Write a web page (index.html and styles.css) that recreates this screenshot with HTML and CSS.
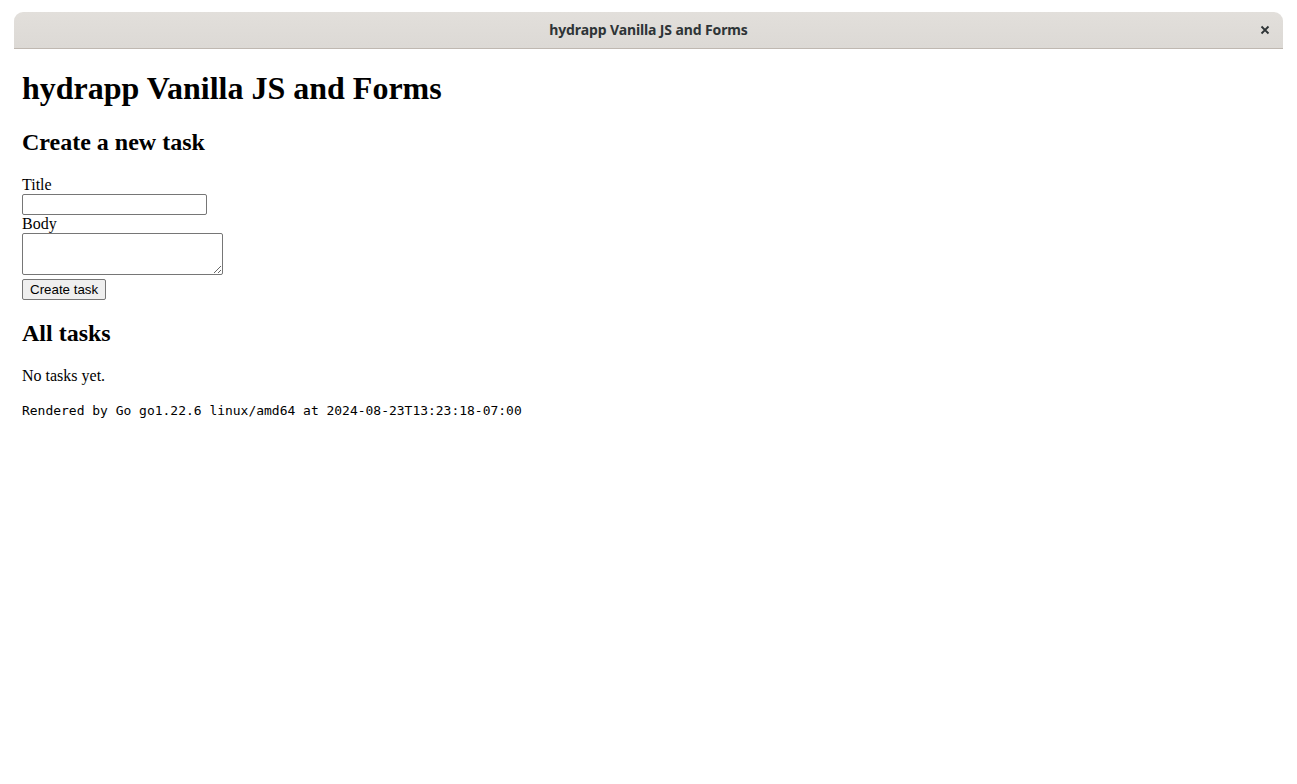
FILE: index.html
```html
<!DOCTYPE html>
<html>
<head>
<meta charset="utf-8">
<title>hydrapp Vanilla JS and Forms</title>
<link rel="stylesheet" href="styles.css">
</head>
<body>
<div class="window">
  <div class="titlebar">
    <span class="title">hydrapp Vanilla JS and Forms</span>
    <span class="close">
      <svg width="10" height="10" viewBox="0 0 10 10"><path d="M1.5 1.5 L8.5 8.5 M8.5 1.5 L1.5 8.5" stroke="#2e3436" stroke-width="1.8" stroke-linecap="butt"/></svg>
    </span>
  </div>
  <div class="content">
    <h1 class="h1">hydrapp Vanilla JS and Forms</h1>
    <h2 class="h2">Create a new task</h2>
    <form class="form">
      <label class="label" for="title">Title</label>
      <input class="input" id="title" type="text">
      <label class="label" for="body">Body</label>
      <textarea class="textarea" id="body"></textarea>
      <button class="button" type="button">Create task</button>
    </form>
    <h2 class="h2">All tasks</h2>
    <p class="p">No tasks yet.</p>
    <small class="small">Rendered by Go go1.22.6 linux/amd64 at 2024-08-23T13:23:18-07:00</small>
  </div>
</div>
</body>
</html>
```
FILE: styles.css
```css
html, body {
  margin: 0;
  padding: 0;
  background: #ffffff;
}
body {
  padding: 12px 14px 0 14px;
  height: 784px;
  box-sizing: border-box;
  overflow: hidden;
}
.window {
  background: #ffffff;
  height: 772px;
  display: flex;
  flex-direction: column;
}
.titlebar {
  height: 37px;
  flex: none;
  box-sizing: border-box;
  padding-bottom: 1px;
  border-radius: 9px 9px 0 0;
  background: linear-gradient(#e2dfdb, #dcd9d5);
  border-bottom: 1px solid #bfb8b1;
  display: flex;
  align-items: center;
  justify-content: center;
  position: relative;
}
.title {
  font-family: "Noto Sans", sans-serif;
  font-weight: 700;
  font-size: 14px;
  color: #2e3436;
  letter-spacing: -0.12px;
}
.close {
  position: absolute;
  right: 13px;
  top: 13px;
  width: 10px;
  height: 10px;
  display: flex;
}
.content {
  padding: 0 8px;
  font-family: "Liberation Serif", serif;
  font-size: 16px;
  color: #000;
}
.h1 {
  font-size: 32px;
  font-weight: bold;
  margin: 21.44px 0;
}
.h2 {
  font-size: 24px;
  font-weight: bold;
  margin: 19.92px 0;
}
.form {
  display: flex;
  flex-direction: column;
  align-items: flex-start;
}
.label {
  display: block;
  line-height: normal;
}
.input {
  width: 185px;
  height: 21px;
  box-sizing: border-box;
  border: 1px solid #767676;
  border-radius: 2px;
  padding: 1px 2px;
  margin: 0;
  font-size: 13.33px;
}
.textarea {
  width: 201px;
  height: 42px;
  box-sizing: border-box;
  border: 1px solid #767676;
  border-radius: 2px;
  margin: 0;
  padding: 2px;
  font-family: "Liberation Mono", monospace;
  font-size: 13.33px;
}
.button {
  margin-top: 4px;
  font-family: "Liberation Sans", Arial, sans-serif;
  font-size: 13.33px;
  padding: 1px 7px;
  height: 21px;
  border: 1px solid #767676;
  border-radius: 2px;
  background: #efefef;
  color: #000;
}
.p {
  margin: 16px 0;
}
.small {
  font-family: "DejaVu Sans Mono", monospace;
  font-size: 12.98px;
}
```
